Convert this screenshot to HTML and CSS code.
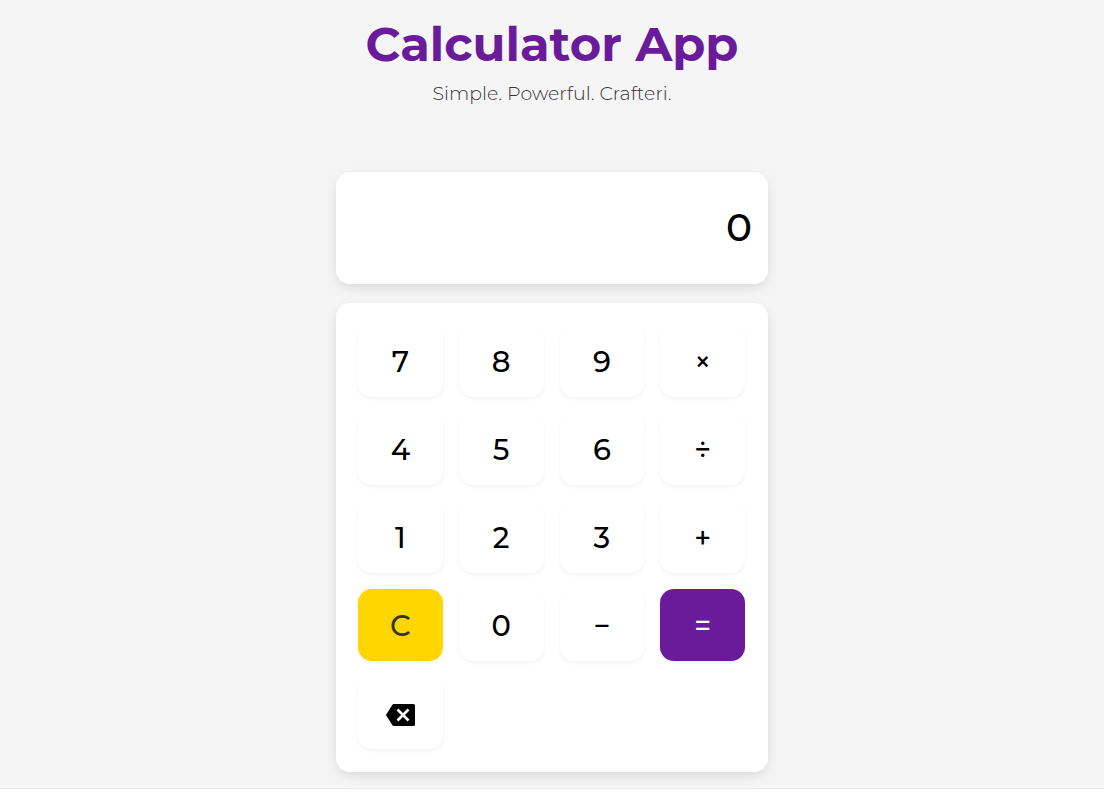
FILE: index.html
```html
<!DOCTYPE html>
<html lang="en">
<head>
<meta charset="utf-8">
<meta name="viewport" content="width=device-width, initial-scale=1">
<title>Calculator App</title>
<link rel="stylesheet" href="styles.css">
</head>
<body>
<div class="page">
  <header class="header">
    <h1 class="title">Calculator App</h1>
    <p class="tagline">Simple. Powerful. Crafteri.</p>
  </header>
  <main class="calculator">
    <output class="display" aria-label="Result">0</output>
    <div class="keypad">
      <button class="key" type="button">7</button>
      <button class="key" type="button">8</button>
      <button class="key" type="button">9</button>
      <button class="key" type="button">×</button>
      <button class="key" type="button">4</button>
      <button class="key" type="button">5</button>
      <button class="key" type="button">6</button>
      <button class="key" type="button">÷</button>
      <button class="key" type="button">1</button>
      <button class="key" type="button">2</button>
      <button class="key" type="button">3</button>
      <button class="key" type="button">+</button>
      <button class="key key-clear" type="button">C</button>
      <button class="key" type="button">0</button>
      <button class="key" type="button">−</button>
      <button class="key key-equals" type="button">=</button>
      <button class="key key-backspace" type="button" aria-label="Backspace">
        <svg class="key-icon" viewBox="0 0 30 24" aria-hidden="true">
          <path d="M8 1H27.500a1.500 1.500 0 0 1 1.500 1.500v19a1.500 1.500 0 0 1-1.500 1.500H8a2 2 0 0 1-1.600-.8L.4 12.800a1.200 1.200 0 0 1 0-1.600L6.400 1.800A2 2 0 0 1 8 1Z" fill="#000"/>
          <path d="m11.500 6.500 11 11M22.500 6.500l-11 11" fill="none" stroke="#fff" stroke-width="2.600"/>
        </svg>
      </button>
    </div>
  </main>
</div>
</body>
</html>
```
FILE: styles.css
```css
* {
  box-sizing: border-box;
}

body {
  margin: 0;
  background: #fff;
  color: #000;
  font-family: Montserrat, Inter, "Open Sans", sans-serif;
}

.page {
  padding: 15px 16px 16px;
  background: #f5f5f5;
  border-bottom: 1px solid #ebebeb;
}

.header {
  text-align: center;
}

.title {
  margin: 0;
  color: #6a1b9a;
  font-size: 48px;
  font-weight: 700;
  line-height: 58px;
}

.tagline {
  margin: 6px 0 0;
  color: #333;
  font-size: 19px;
  font-weight: 300;
  line-height: 30px;
}

.calculator {
  display: flex;
  flex-direction: column;
  gap: 19px;
  max-width: 432px;
  margin: 63px auto 0;
}

.display,
.keypad {
  border-radius: 14px;
  background: #fff;
  box-shadow: 0 4px 12px rgba(0, 0, 0, 0.1);
}

.display {
  display: flex;
  align-items: center;
  justify-content: flex-end;
  min-height: 112px;
  padding: 16px 16px 18px;
  font-size: 39px;
  font-weight: 500;
}

.keypad {
  display: grid;
  grid-template-columns: repeat(4, 1fr);
  grid-auto-rows: 72px;
  gap: 16px;
  padding: 22px 23px 23px 22px;
}

.key {
  display: flex;
  align-items: center;
  justify-content: center;
  padding: 0;
  border: 0;
  border-radius: 14px;
  background: #fff;
  color: #000;
  box-shadow: 0 2px 4px rgba(0, 0, 0, 0.05);
  font: inherit;
  font-size: 29px;
  font-weight: 500;
  cursor: pointer;
}

.key-clear {
  background: #ffd600;
  color: #333;
}

.key-equals {
  background: #6a1b9a;
  color: #fff;
}

.key-backspace {
  padding: 4px 0 0 2px;
}

.key-icon {
  width: 30px;
  height: 24px;
}
```
